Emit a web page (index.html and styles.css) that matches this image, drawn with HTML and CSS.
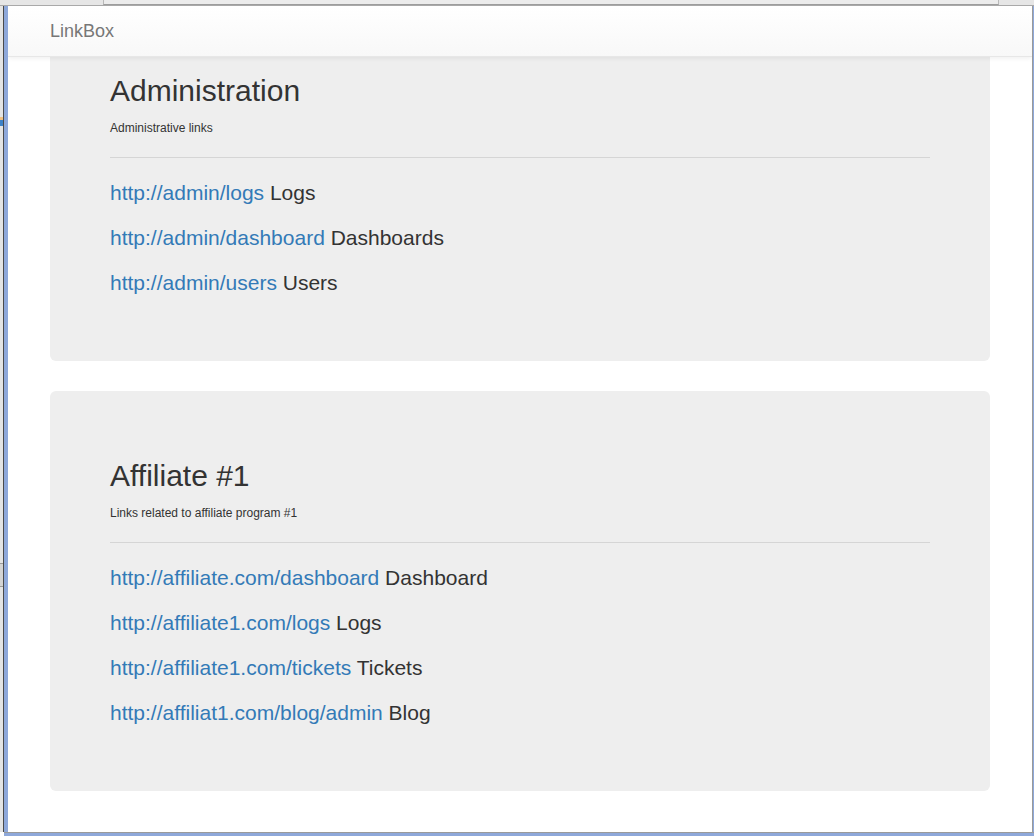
FILE: index.html
```html
<!DOCTYPE html>
<html>
<head>
<meta charset="utf-8">
<title>LinkBox</title>
<link rel="stylesheet" href="styles.css">
</head>
<body>
<div class="screen">
  <div class="topbar"><div class="topbox"></div></div>
  <div class="middle">
    <div class="left-chrome">
      <span class="lc-light"><span class="lc-icon"></span><span class="lc-box"></span></span>
      <span class="lc-dark"></span>
      <span class="lc-blue"></span>
    </div>
    <div class="viewport">
      <nav class="navbar">
        <div class="nav-container">
          <a class="brand" href="#">LinkBox</a>
        </div>
      </nav>
      <div class="container">
        <section class="jumbotron">
          <h2 class="title">Administration</h2>
          <p class="desc">Administrative links</p>
          <hr class="rule">
          <p class="link-row"><a href="#">http://admin/logs</a> Logs</p>
          <p class="link-row"><a href="#">http://admin/dashboard</a> Dashboards</p>
          <p class="link-row"><a href="#">http://admin/users</a> Users</p>
        </section>
        <section class="jumbotron">
          <h2 class="title">Affiliate #1</h2>
          <p class="desc">Links related to affiliate program #1</p>
          <hr class="rule">
          <p class="link-row"><a href="#">http://affiliate.com/dashboard</a> Dashboard</p>
          <p class="link-row"><a href="#">http://affiliate1.com/logs</a> Logs</p>
          <p class="link-row"><a href="#">http://affiliate1.com/tickets</a> Tickets</p>
          <p class="link-row"><a href="#">http://affiliat1.com/blog/admin</a> Blog</p>
        </section>
      </div>
    </div>
    <div class="right-chrome">
      <span class="rc-gray"></span>
      <span class="rc-blue"></span>
    </div>
  </div>
  <div class="bottom-chrome">
    <span class="bc-gray"></span>
    <span class="bc-blue"></span>
  </div>
</div>
</body>
</html>
```

FILE: styles.css
```css
html, body {
  margin: 0;
  padding: 0;
  width: 1034px;
  height: 836px;
  overflow: hidden;
  background: #ffffff;
}

.screen {
  display: flex;
  flex-direction: column;
  width: 1034px;
  height: 836px;
  font-family: "Liberation Sans", Arial, Helvetica, sans-serif;
}

/* top strip of the surrounding window */
.topbar {
  height: 5px;
  flex: 0 0 5px;
  background: #e6e6e6;
  border-bottom: 1px solid #a9a9a9;
  display: flex;
  padding-left: 103px;
  padding-right: 35px;
}
.topbox {
  flex: 1;
  border-left: 1px solid #b9b9b9;
  border-right: 1px solid #b9b9b9;
  border-bottom: 1px solid #9d9d9d;
  background: #ececec;
  height: 4px;
}

.middle {
  flex: 1;
  display: flex;
  min-height: 0;
}

.left-chrome {
  display: flex;
  flex: 0 0 8px;
}
.lc-light {
  width: 3px;
  background: #e4e4e4;
  display: flex;
  flex-direction: column;
}
.lc-icon {
  margin-top: 111px;
  height: 9px;
  background: linear-gradient(#f0c080 0 35%, #3d82c8 35% 100%);
}
.lc-box {
  margin-top: 437px;
  height: 22px;
  background: #d4d4d4;
  border-top: 1px solid #9a9a9a;
  border-bottom: 1px solid #9a9a9a;
}
.lc-dark {
  width: 1px;
  background: #4a4a4a;
}
.lc-blue {
  width: 4px;
  background: #8ea8da;
}

.right-chrome {
  display: flex;
  flex: 0 0 2px;
}
.rc-gray {
  width: 1px;
  background: #9a9a9a;
}
.rc-blue {
  width: 1px;
  background: #8ea8da;
}

.bottom-chrome {
  flex: 0 0 4px;
  display: flex;
  flex-direction: column;
  padding-left: 4px;
}
.bc-gray {
  height: 1px;
  background: #9a9a9a;
}
.bc-blue {
  height: 3px;
  background: #8ea8da;
}

/* the page itself */
.viewport {
  flex: 1;
  position: relative;
  overflow: hidden;
  background: #ffffff;
  color: #333333;
  font-size: 14px;
  line-height: 20px;
}

.navbar {
  position: absolute;
  top: 0;
  left: 0;
  right: 0;
  height: 50px;
  background: linear-gradient(to bottom, #ffffff 0%, #f8f8f8 100%);
  border-bottom: 1px solid #e7e7e7;
  box-shadow: 0 1px 5px rgba(0, 0, 0, 0.075);
  z-index: 10;
}
.nav-container {
  width: 970px;
  margin: 0 auto;
  padding: 0 15px;
  box-sizing: border-box;
}
.brand {
  display: inline-block;
  padding: 15px 15px;
  margin-left: -15px;
  font-size: 18px;
  line-height: 20px;
  color: #777777;
  text-decoration: none;
}

.container {
  width: 970px;
  margin: 0 auto;
  padding: 0 15px;
  box-sizing: border-box;
}

.jumbotron {
  background: #eeeeee;
  border-radius: 6px;
  padding: 48px 60px;
  margin-bottom: 30px;
}

.title {
  margin: 20px 0 10px;
  font-size: 30px;
  line-height: 33px;
  font-weight: 500;
  color: #333333;
}

.desc {
  margin: 0;
  font-size: 12px;
  line-height: 22px;
}

.rule {
  margin: 18px 0 20px;
  border: 0;
  border-top: 1px solid #d5d5d5;
  height: 0;
}

.link-row {
  margin: 0 0 15px;
  font-size: 21px;
  line-height: 30px;
  font-weight: 400;
}
.link-row a {
  color: #337ab7;
  text-decoration: none;
}
```
